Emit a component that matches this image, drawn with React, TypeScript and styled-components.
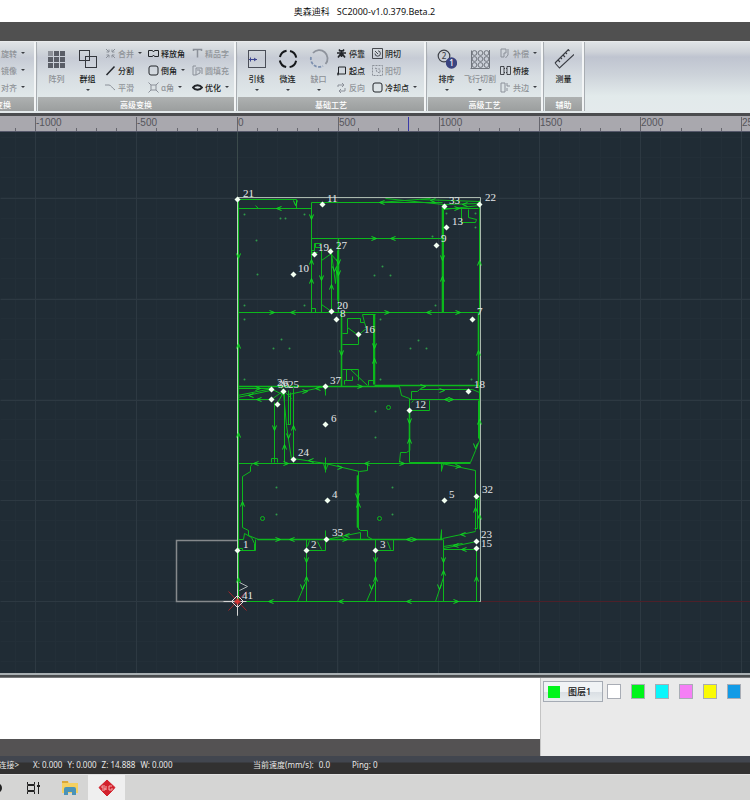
import React from "react";
import styled, { createGlobalStyle } from "styled-components";

const GlobalStyle = createGlobalStyle`
  * { box-sizing: border-box; }
  html, body { margin: 0; height: 100%; }
  body { overflow: hidden; }
  #root { height: 100%; }
  body, button { font-family: "Noto Sans", "Noto Sans CJK SC", sans-serif; }
`;

const Page = styled.div`
  display: flex;
  flex-direction: column;
  height: 100vh;
  overflow: hidden;
  background: #505050;
  color: #222;
`;

const TitleBar = styled.header`
  flex: none;
  display: flex;
  justify-content: center;
  align-items: center;
  gap: 7px;
  height: 22px;
  padding-right: 21px;
  background: #fff;
  font-size: 9px;
  color: #111;
  white-space: pre;
`;

const MenuStrip = styled.div`
  flex: none;
  height: 19px;
  background: #505050;
`;

const Ribbon = styled.nav`
  flex: none;
  display: flex;
  height: 72px;
  padding-bottom: 2px;
  background: linear-gradient(#dfe3e6 0, #ced2d8 10px, #bfc4d0 15px, #ccd2d9 32px, #e2eaeb 54px, #e4eaec 100%);
  border-top: 1px solid #e8eaeb;
  overflow: hidden;
`;

const Group = styled.section<{ $cut?: boolean }>`
  flex: none;
  display: flex;
  flex-direction: column;
  width: ${(p) => (p.$cut ? "80px" : "auto")};
  margin-left: ${(p) => (p.$cut ? "-44px" : "0")};
  margin-right: 2px;
  border-right: 2px solid #f3f5f6;
  background: linear-gradient(#e0e3e6 0, #cfd4da 10px, #c6cbd5 16px, #d7dde2 34px, #e0e7e9 54px);
  box-shadow: 1px 0 0 #a8adb2;
`;

const GroupBody = styled.div<{ $end?: boolean }>`
  flex: 1;
  display: flex;
  justify-content: ${(p) => (p.$end ? "flex-end" : "flex-start")};
  padding: 3px 3px 0;
`;

const Caption = styled.h2`
  flex: none;
  display: flex;
  justify-content: center;
  align-items: center;
  height: 14px;
  margin: 0;
  background: linear-gradient(#aeb1b1, #9b9e9e);
  color: #fff;
  font-size: 8px;
  font-weight: 500;
  white-space: nowrap;
`;

const BigButton = styled.button<{ $off?: boolean; $wide?: boolean }>`
  display: flex;
  flex-direction: column;
  align-items: center;
  width: ${(p) => (p.$wide ? "36px" : "31px")};
  padding: 4px 0 0;
  border: 0;
  background: none;
  color: ${(p) => (p.$off ? "#8d9196" : "#1d1f24")};
  font-size: 8px;
  font-weight: 500;
  line-height: 12px;
  white-space: nowrap;
  svg { display: block; margin-bottom: 4px; }
  i { margin-top: 4px; }
`;

const Column = styled.div<{ $w: number }>`
  display: grid;
  grid-template-rows: repeat(3, 16px);
  gap: 1px;
  align-content: start;
  width: ${(p) => p.$w}px;
  ${BigButton} + & { margin-left: 2px; }
`;

const SmallButton = styled.button<{ $off?: boolean }>`
  display: flex;
  align-items: center;
  gap: 2px;
  padding: 0;
  border: 0;
  background: none;
  color: ${(p) => (p.$off ? "#8f9398" : "#1d1f24")};
  font-size: 8px;
  font-weight: 500;
  white-space: nowrap;
`;

const Caret = styled.i`
  width: 0;
  height: 0;
  margin: 0 2px;
  border: 2px solid transparent;
  border-top-color: #3a3d42;
  border-bottom: 0;
`;

const Ruler = styled.div`
  flex: none;
  height: 19px;
  border-top: 3px solid #4b4c4f;
  border-bottom: 1px solid #55586a;
  background: #a9a8ae;
  overflow: hidden;
  svg { display: block; }
  text { font: 10px "Liberation Sans", sans-serif; fill: #55555c; }
`;

const Canvas = styled.main`
  flex: 1;
  min-height: 0;
  background: #202c35;
  overflow: hidden;
  svg { display: block; }
  text { font: 11px "Liberation Serif", serif; fill: #e4e8ea; }
`;

const Splitter = styled.div`
  flex: none;
  height: 5px;
  border-top: 2px solid #a9b0b3;
  border-bottom: 1px solid #77797b;
  background: #4a4d4f;
`;

const Dock = styled.section`
  flex: none;
  display: grid;
  grid-template-columns: 72% 28%;
  height: 78px;
`;

const LogPane = styled.div`
  display: flex;
  flex-direction: column;
  background: #545253;
`;

const LogView = styled.div`
  flex: 1;
  margin-bottom: 17px;
  background: #fff;
`;

const LayerPane = styled.div`
  display: flex;
  align-items: flex-start;
  gap: 10px;
  padding: 3px 0 0 2px;
  background: #eaeaea;
  border-left: 1px solid #c4c4c4;
  overflow: hidden;
`;

const LayerButton = styled.button`
  flex: none;
  display: flex;
  align-items: center;
  gap: 8px;
  width: 60px;
  height: 21px;
  margin-right: -6px;
  padding: 0 4px;
  border: 1px solid #a5abb4;
  background: linear-gradient(#f0f3f5 0 50%, #d9dee3 50%, #e8ecee);
  color: #111;
  font-size: 9px;
  font-weight: 500;
  white-space: nowrap;
`;

const Swatch = styled.span<{ $c: string }>`
  flex: none;
  width: 12px;
  height: 12px;
  background: ${(p) => p.$c};
`;

const SwatchButton = styled.button<{ $c: string }>`
  flex: none;
  width: 14px;
  height: 15px;
  margin-top: 3px;
  padding: 0;
  border: 1px solid #a9adb5;
  background: ${(p) => p.$c};
`;

const StatusBar = styled.footer`
  flex: none;
  display: grid;
  grid-template-columns: 19px 206px 85px auto;
  column-gap: 14px;
  align-items: center;
  height: 18px;
  background: linear-gradient(#42464f 0 6px, #323131 7px);
  color: #e8e8e8;
  font-size: 8px;
  line-height: 12px;
  white-space: pre;
`;

const Status = styled.span<{ $end?: boolean }>`
  display: flex;
  justify-content: ${(p) => (p.$end ? "flex-end" : "flex-start")};
  gap: 5px;
`;

const TaskBar = styled.div`
  flex: none;
  display: flex;
  height: 26px;
  background: #d5d5d4;
  border-top: 1px solid #e2e2e2;
`;

const Task = styled.button<{ $active?: boolean; $narrow?: boolean }>`
  display: grid;
  place-items: center;
  width: ${(p) => (p.$narrow ? "14px" : "37px")};
  padding: 0;
  border: 0;
  background: ${(p) => (p.$active ? "#efefef" : "transparent")};
  svg { display: block; }
`;

/* ---------- icons ---------- */

const DARK = "#23262b";
const DIM = "#8b9099";

const big: Record<string, React.ReactNode> = {
  array: [0, 1, 2].map((r) =>
    [0, 1, 2].map((c) => (
      <rect key={`${r}${c}`} x={1 + c * 6} y={2 + r * 6} width="5" height="5" fill={r + c === 0 ? "#8d9199" : "#5a5e67"} />
    ))
  ),
  group: (
    <g fill="none" stroke="#34373d">
      <rect x="1.5" y="1.5" width="10" height="10" />
      <rect x="7.5" y="7.5" width="11" height="11" />
    </g>
  ),
  lead: (
    <g fill="none" stroke="#4a4e58">
      <rect x="1.5" y="1.5" width="17" height="17" />
      <path d="M2 10.500h8" stroke="#3d4590" />
      <path d="M3.500 8.500v4M7 9l2 1.500L7 12" stroke="#3d4590" />
    </g>
  ),
  micro: <circle cx="10" cy="10" r="8.300" fill="none" stroke="#15171a" strokeWidth="2" strokeDasharray="9.500 3.540" strokeDashoffset="-1.800" />,
  gap: (
    <g fill="none" strokeWidth="1.800">
      <path d="M4 4a8.300 8.300 0 1 1 12.500 11" stroke="#8e939c" />
      <path d="M2 8a8.300 8.300 0 0 0 12 9" stroke="#7c8fae" strokeDasharray="3 1.500" />
    </g>
  ),
  sort: (
    <g>
      <circle cx="7" cy="7" r="5.800" fill="none" stroke="#3e4148" strokeWidth="1.200" />
      <text x="7" y="10" fontSize="8" textAnchor="middle" fill="#3e4148">2</text>
      <circle cx="14.500" cy="14" r="5.700" fill="#3a4380" />
      <text x="14.500" y="17" fontSize="8" textAnchor="middle" fill="#fff">1</text>
    </g>
  ),
  fly: (
    <g fill="none" stroke="#70757d">
      <path d="M1.500 19V1.500M.5 19.500h19M19.500 1v18" />
      {[0, 1, 2].map((r) => [0, 1, 2].map((c) => <circle key={`${r}${c}`} cx={4.500 + c * 6} cy={4 + r * 6} r="2.400" />))}
    </g>
  ),
  measure: (
    <g fill="none" stroke="#393c43" strokeWidth="1.100">
      <path d="M1 14 14.500.5M1 14l4.500 5L20 5.500" />
      <path d="m4 11 2 2m.5-4.500 1.500 1.500m1-4 2 2m.5-4.500L13 5m1-4.500 1.500 1.500" />
    </g>
  ),
};

const small: Record<string, React.ReactNode> = {
  merge: <path d="M1 1l3 3M10 1 7 4M1 10l3-3M10 10 7 7M4 1.500V4H1.500M7 1.500V4h2.500M4 9.500V7H1.500M7 9.500V7h2.500" />,
  split: <path d="M1.500 10 9.500 1.500" strokeWidth="1.500" />,
  smooth: <path d="M0 3h4c2 0 3 3 6 5" />,
  release: <path d="M.5 2.500h4L5.500 4l1-1.500h4v6h-4L5.500 7l-1 1.500h-4z" />,
  round: <rect x="1" y="1" width="9" height="9" rx="2" />,
  alpha: <path d="M3 3h5v5H3zM.5.5 3 3M10.500.5 8 3M.5 10.500 3 8M10.500 10.500 8 8" />,
  glyph: <path d="M1.500 3V1.500h8V3M5.500 1.500v8" strokeWidth="1.500" />,
  fill: <path d="M4 1H1v9h3M4 3h6M4 3v7l4-2V5H5M10 3v6" />,
  eye: <path d="M1 5.500C3 2.500 8 2.500 10 5.500 8 8.500 3 8.500 1 5.500z" strokeWidth="2" />,
  dock: <path d="M3 1.500l1.500 2M8 1.500 6.500 3.500M1 5h9M5.500 2v7M2 9.500 5 5.500M9 9.500 6 5.500" strokeWidth="1.700" />,
  start: <path d="M2.500 2h7v7h-7zM1 9h2M2 7.500v3" />,
  reverse: <path d="M2 5V3h6M6 1l2 2-2 2M9 6v3H3M5 7 3 9l2 2" />,
  inner: <path d="M.5.5h10v10H.5zM3 5.500a2.700 2.700 0 1 0 3-2.700M3 3l3 3" strokeWidth=".8" />,
  outer: <path d="M.5.5h10v10H.5zM3.500 3l1.500 1h3v4l-3-1z" strokeDasharray="2 1" />,
  comp: <path d="M1 1h5v4H4v4H1zM8 1v6L5.500 10" />,
  bridge: <path d="M.5 1.500H4v8H.5zM7 1.500h3.500v8H7zM4 3.500h1M4 7.500h1M6 3.500h1M6 7.500h1" strokeWidth=".8" />,
  shared: <path d="M1 1h4v9H1zM7 1v3h3M7 6v3" />,
  mirror: <path d="M1 9 7 2l3 7z" />,
};

const BigIcon = ({ name }: { name: string }) => (
  <svg width="20" height="20" viewBox="0 0 20 20" aria-hidden="true">{big[name]}</svg>
);
const SmallIcon = ({ name, off }: { name: string; off?: boolean }) => (
  <svg width="11" height="11" viewBox="0 0 11 11" fill="none" stroke={off ? DIM : DARK} aria-hidden="true">{small[name]}</svg>
);

type Item = { icon: string; text: string; off?: boolean; caret?: boolean };
const i = (icon: string, text: string, flags = ""): Item => ({
  icon, text, off: flags.includes("o"), caret: flags.includes("c"),
});

const Big = ({ item, wide }: { item: Item; wide?: boolean }) => (
  <BigButton $off={item.off} $wide={wide}>
    <BigIcon name={item.icon} />
    {item.text}
    {item.caret && <Caret />}
  </BigButton>
);

const Smalls = ({ items, w }: { items: Item[]; w: number }) => (
  <Column $w={w}>
    {items.map((it) => (
      <SmallButton key={it.text} $off={it.off}>
        <SmallIcon name={it.icon} off={it.off} />
        {it.text}
        {it.caret && <Caret />}
      </SmallButton>
    ))}
  </Column>
);

/* ---------- ruler ---------- */

const ORIGIN_X = 237;
const STEP = 100.8;
const majors = Array.from({ length: 24 }, (_, n) => n - 2);

const RulerScale = () => (
  <svg width="100%" height="16">
    {majors.map((m) => {
      const x = Math.round(ORIGIN_X + m * STEP);
      return (
        <g key={m}>
          <path d={`M${x + 0.5} 1V16`} stroke="#66666e" />
          {[-1, 1, 2, 3, 4].map((k) => (
            <path key={k} d={`M${Math.round(ORIGIN_X + (m + k / 5) * STEP) + 0.5} 12V16`} stroke="#66666e" />
          ))}
          <text x={x + 1} y="10">{m * 500}</text>
        </g>
      );
    })}
    <path d="M408.500 1V16" stroke="#3a3aa8" />
  </svg>
);

/* ---------- drawing ---------- */

const outlines = `
M237 199H296V208M237 208H311M311 202V312M311 202H442M311 238H443M238 312H479M238 198V601
M258 208l-3-3M442 205V312M443 205V312M444 208H478M479 200V312M385 198L443 204M378 202L430 198M420 199L479 201M443 204L479 203M443 209L479 205
M461 208V222H475L476 219L468 217V209M311 250H314V243H321M321 250V312M331 248V312M338 238V312M337 250V300
M321 260L331 253L335 283L338 250M330 253L338 262M321 304L331 311M311 308H315V312M315 243V247H321M311 252H317
M341 312V386M342 344H358V335L347 327V318H360V322H364L362 314H375M342 333H347V327M364 322L366 328L362 331L358 335M373 314V384M342 369H358V380M344 384V380H352V376M350 369L367 385M368 385V380H374M346 369V380
M237 386H399M375 385H479M478 312V386M237 388H272M237 399H271M237 397L270 390M237 395L272 388M274 402V462M284 390V462M288 390V424M290 392V424H287M293 388V462M283 392L286 425L291 459M288 394L325 386M271 399L282 391M276 404L283 392M271 462V458H277V462M281 388L291 398M268 387L284 395
M237 463H470M399 386L401 395L409 398V450L406 452H400L399 462M409 399H479M411 399V391H417L419 389H472L479 392M409 410H429V400M411 402L413 400M479 385V440L475 450L470 462H409V399M478 400V438
M293 458L325 463L359 471M325 386V395M324 386L325 392M325 457V472M323 463L325 470L328 463M252 463L250 466V471L242 476V527L248 530V535L258 539M358 471V529M357 475V527M359 471L367 470V463M358 528L360 530H367V536L372 539M326 539L360 532V539
M441 463L475 470M441 463V471M443 463L441 470M475 470V530M442 538L475 531M441 529V539M440 539L441 530M477 496V528H474M479 496V529M475 496L479 500M475 496V528
M257 539H442M237 539H243L244 533L251 537L254 543V550M255 539V550H237M238 548H242V550M306 539V601M306 550H325V530M309 540L307 546M317 541L321 549M375 539V601M375 550H393V539M387 541L390 549M306 580L297 601M375 580L366 601M443 539V601M443 577L435 601M443 548L476 541M443 546L462 543M443 549H476M476 549V601M238 601H479M237 550V601`;

const heavy = "M442 206V312M357 475V527M257 539H442M409 410V450M374 314V384M341 312V386M338 240V300M478 312V386M237 386H399M374 385H478";

const arrows: [number, number, number][] = [
  [278, 208, 180], [295, 203, 90], [311, 217, 90], [238, 256, 90], [311, 261, -90], [311, 280, -90], [321, 278, 90], [331, 286, -90], [338, 262, 90], [338, 273, 90], [334, 269, 90],
  [272, 312, 0], [292, 312, 180], [374, 238, 0], [392, 238, 180], [381, 202, 180], [432, 200, 180], [457, 208, 0], [464, 204, 180], [442, 258, 90], [442, 278, -90], [479, 262, -90],
  [387, 312, 0], [428, 312, 180], [458, 312, 0], [238, 345, -90], [341, 353, 90], [374, 346, 90], [374, 360, -90], [478, 352, -90], [423, 386, 0], [360, 386, 0], [442, 390, 0],
  [258, 388, 0], [258, 399, 180], [250, 395, 180], [305, 391, 0], [317, 388, 180], [238, 434, -90], [274, 428, 90], [284, 446, -90], [293, 427, -90], [288, 436, 90],
  [446, 399, 180], [451, 399, 0], [409, 421, 90], [409, 440, -90], [479, 421, -90], [475, 446, 90], [366, 463, 180], [402, 463, 0], [286, 463, 0], [255, 463, 180],
  [310, 460, 180], [340, 467, 0], [242, 503, -90], [357, 496, 90], [358, 504, -90], [458, 466, 0], [475, 509, -90], [479, 516, -90], [462, 534, 180], [346, 535, 180],
  [278, 539, 0], [291, 539, 180], [345, 539, 0], [408, 539, 180], [414, 539, 0], [306, 560, 90], [306, 578, -90], [302, 587, 90], [375, 560, 90], [375, 578, -90], [371, 587, 90],
  [443, 560, 90], [443, 572, -90], [439, 587, 90], [476, 578, -90], [455, 545, 180], [463, 549, 180], [238, 579, -90], [270, 601, 180], [340, 601, 180], [408, 601, 180], [456, 601, 0],
];

const markers: [number, number][] = [
  [237, 199], [322, 204], [444, 206], [479, 204], [446, 227], [436, 245], [293, 274], [314, 254], [330, 251], [331, 311], [336, 319], [472, 319], [358, 334], [468, 391], [409, 410],
  [325, 386], [325, 424], [293, 459], [271, 389], [271, 399], [277, 404], [283, 391], [327, 500], [444, 500], [476, 496], [326, 539], [237, 550], [306, 550], [375, 550], [476, 541], [476, 548],
];

const holes: [number, number][] = [
  [244, 214], [304, 214], [280, 218], [285, 218], [256, 240], [257, 274], [244, 305], [304, 305], [244, 319], [281, 339], [273, 348], [289, 348], [244, 379],
  [382, 266], [374, 275], [390, 275], [435, 305], [432, 236], [446, 213], [475, 213], [475, 227], [380, 319], [418, 340], [410, 348], [426, 348], [380, 379], [471, 379],
  [375, 411], [375, 437], [276, 487], [276, 514], [392, 487], [392, 514],
];

const rings: [number, number][] = [[388, 407], [262, 518], [379, 518]];

const labels: [string, number, number][] = [
  ["21", 243, 197], ["11", 327, 202], ["33", 449, 204], ["22", 485, 201], ["13", 452, 225], ["9", 441, 242], ["10", 298, 272], ["19", 318, 251], ["27", 336, 249], ["20", 337, 309],
  ["8", 340, 317], ["7", 477, 315], ["16", 364, 333], ["37", 330, 384], ["26", 277, 386], ["36", 278, 388], ["25", 288, 388], ["18", 474, 388], ["12", 415, 408], ["6", 331, 422], ["24", 298, 456],
  ["4", 332, 498], ["5", 449, 498], ["32", 482, 493], ["35", 332, 536], ["1", 243, 548], ["2", 311, 548], ["3", 380, 548], ["23", 481, 538], ["15", 481, 547], ["41", 242, 599],
];

const lines = (step: number, from: number, count: number) => Array.from({ length: count }, (_, n) => Math.round(from + n * step));
const minorX = lines(STEP / 5, 15, 100);
const minorY = lines(STEP / 5, 137, 60);
const majorX = lines(STEP, 35, 20);
const majorY = lines(STEP, 198, 12);

const Drawing = () => (
  <svg width="100%" height="100%" role="img" aria-label="排样图">
    <g transform="translate(.5 -131.500)" fill="none">
      <path d={minorX.map((x) => `M${x} 100V2000`).join("") + minorY.map((y) => `M0 ${y}H3000`).join("")} stroke="#232f38" />
      <path d={majorX.map((x) => `M${x} 100V2000`).join("") + majorY.map((y) => `M0 ${y}H3000`).join("")} stroke="#2d3942" />
      <path d="M480 601H3000" stroke="#4d2029" />
      <path d="M237 130V198" stroke="#3b4a4b" />
      <path d="M237 540H176V601H237" stroke="#85898c" strokeWidth="1.500" />
      <path d="M237 197H480V601H237" stroke="#a9b8ad" />
      <path d={outlines} stroke="#0cb81c" />
      <path d={heavy} stroke="#0cb81c" strokeWidth="1.600" />
      <path d="M237 198V615" stroke="#b9d4bb" />
      <path d="M480 198V601" stroke="#a9b8ad" />
      {arrows.map(([x, y, a], n) => (
        <path key={n} d="M-3-2 2 0-3 2" transform={`translate(${x} ${y}) rotate(${a})`} stroke="#12d824" />
      ))}
      {holes.map(([x, y], n) => <circle key={n} cx={x} cy={y} r="1" fill="#2f9a4a" />)}
      {rings.map(([x, y], n) => <circle key={n} cx={x} cy={y} r="2" stroke="#0cb81c" />)}
      <path d="M228 591 246 610M246 591 228 610" stroke="#a3262c" />
      <path d="M223 601H246M237 589V615" stroke="#d5d5d5" />
      <path d="M237 595 243 601 237 607 231 601Z" stroke="#f0d8d8" />
      <path d="M234 601H240M237 598V604" stroke="#e03434" strokeWidth="2" />
      <path d="M239 582 247 586 239 590" stroke="#aeb6b6" />
      {markers.map(([x, y], n) => (
        <path key={n} d={`M${x} ${y - 3}L${x + 3} ${y}L${x} ${y + 3}L${x - 3} ${y}Z`} fill="#f2fff2" />
      ))}
    </g>
    <g transform="translate(0 -132)">
      {labels.map(([t, x, y]) => <text key={t} x={x} y={y}>{t}</text>)}
    </g>
  </svg>
);

const palette: [string, string][] = [
  ["白色", "#ffffff"], ["绿色", "#00f51a"], ["青色", "#0bf6fb"], ["粉色", "#f57ff5"], ["黄色", "#fbfb05"], ["蓝色", "#129be6"], ["浅蓝", "#8fb8e8"],
];

export default function App() {
  return (
    <Page>
      <GlobalStyle />
      <TitleBar><span>奥森迪科</span><span>SC2000-v1.0.379.Beta.2</span></TitleBar>
      <MenuStrip />
      <Ribbon aria-label="功能区">
        <Group $cut>
          <GroupBody $end>
            <Smalls w={43} items={[i("mirror", "旋转", "oc"), i("mirror", "镜像", "oc"), i("smooth", "对齐", "oc")]} />
          </GroupBody>
          <Caption>几何变换</Caption>
        </Group>
        <Group>
          <GroupBody>
            <Big item={i("array", "阵列", "o")} />
            <Big item={i("group", "群组", "c")} />
            <Smalls w={43} items={[i("merge", "合并", "oc"), i("split", "分割"), i("smooth", "平滑", "o")]} />
            <Smalls w={44} items={[i("release", "释放角"), i("round", "倒角", "c"), i("alpha", "α角", "oc")]} />
            <Smalls w={39} items={[i("glyph", "精品字", "o"), i("fill", "圆填充", "o"), i("eye", "优化", "c")]} />
          </GroupBody>
          <Caption>高级变换</Caption>
        </Group>
        <Group>
          <GroupBody>
            <Big item={i("lead", "引线", "c")} />
            <Big item={i("micro", "微连", "c")} />
            <Big item={i("gap", "缺口", "oc")} />
            <Smalls w={36} items={[i("dock", "停靠"), i("start", "起点"), i("reverse", "反向", "o")]} />
            <Smalls w={49} items={[i("inner", "阴切"), i("outer", "阳切", "o"), i("round", "冷却点", "c")]} />
          </GroupBody>
          <Caption>基础工艺</Caption>
        </Group>
        <Group>
          <GroupBody>
            <Big item={i("sort", "排序", "c")} />
            <Big wide item={i("fly", "飞行切割", "oc")} />
            <Smalls w={38} items={[i("comp", "补偿", "oc"), i("bridge", "桥接"), i("shared", "共边", "oc")]} />
          </GroupBody>
          <Caption>高级工艺</Caption>
        </Group>
        <Group>
          <GroupBody><Big item={i("measure", "测量")} /></GroupBody>
          <Caption>辅助</Caption>
        </Group>
      </Ribbon>
      <Ruler><RulerScale /></Ruler>
      <Canvas><Drawing /></Canvas>
      <Splitter />
      <Dock>
        <LogPane><LogView /></LogPane>
        <LayerPane>
          <LayerButton><Swatch $c="#00f51a" />图层1</LayerButton>
          {palette.map(([name, c]) => <SwatchButton key={c} $c={c} aria-label={name} />)}
        </LayerPane>
      </Dock>
      <StatusBar>
        <Status $end>连接&gt;</Status>
        <Status><span>X: 0.000</span><span>Y: 0.000</span><span>Z: 14.888</span><span>W: 0.000</span></Status>
        <Status><span>当前速度(mm/s):</span><span>0.0</span></Status>
        <Status>Ping: 0</Status>
      </StatusBar>
      <TaskBar>
        <Task $narrow aria-label="搜索">
          <svg width="14" height="14"><circle cx="-3" cy="7" r="4" fill="none" stroke="#222" strokeWidth="2" /></svg>
        </Task>
        <Task aria-label="任务视图">
          <svg width="14" height="14" fill="none" stroke="#222">
            <path d="M1.500 1v2.500h7V1M1.500 13v-2.500h7V13M1.500 4.500v5h7v-5zM12.500 1v12" />
            <path d="M11 5h3" strokeWidth="2" />
          </svg>
        </Task>
        <Task aria-label="文件资源管理器">
          <svg width="18" height="16">
            <path d="M1 1h6l1 2h9v10H1z" fill="#f5d060" />
            <path d="M1 1h6v2H1z" fill="#d9a73a" />
            <path d="M3 15V9q0-2 2-2h8q2 0 2 2v6h-4v-3H7v3z" fill="#4a93b8" />
          </svg>
        </Task>
        <Task $active aria-label="SC2000">
          <svg width="18" height="18">
            <path d="M9 1 17 8.500 13 13 9 17 5 13 1 8.500Z" fill="#d3222d" stroke="#d3222d" strokeLinejoin="round" />
            <path d="M7 7H4v2h3v2H4M8 7v4M14 7h-3v4h3V9" fill="none" stroke="#f3b0b0" />
          </svg>
        </Task>
      </TaskBar>
    </Page>
  );
}
